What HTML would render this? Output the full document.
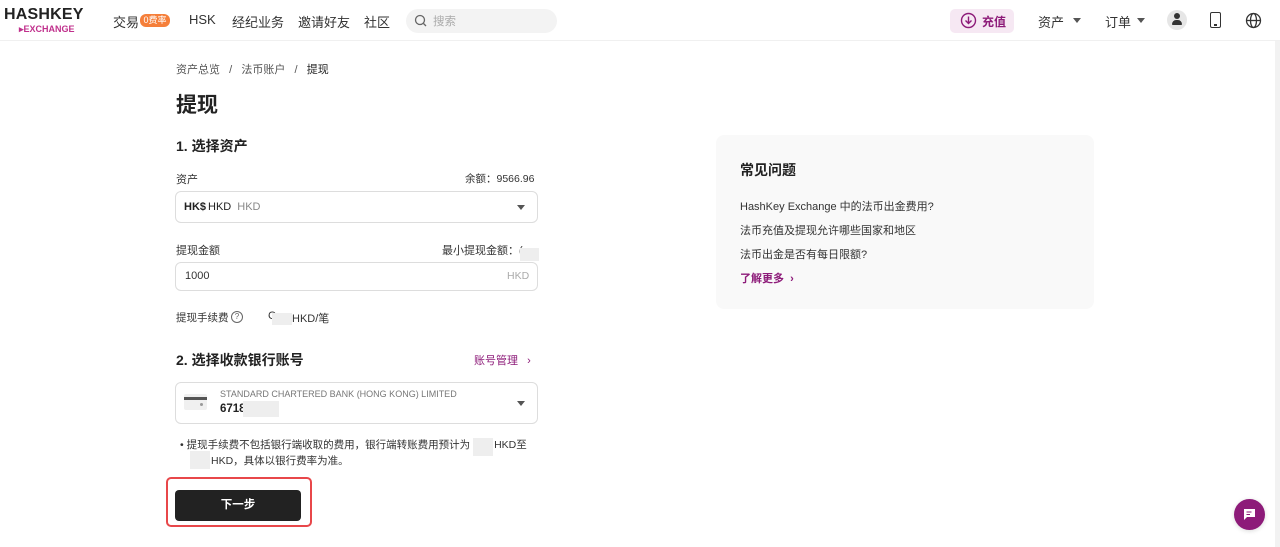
<!DOCTYPE html>
<html><head><meta charset="utf-8"><style>
*{box-sizing:border-box;margin:0;padding:0}
body{width:1280px;height:547px;overflow:hidden;background:#fff;font-family:"Liberation Sans","Noto Sans CJK SC",sans-serif;color:#222;position:relative}
.a{position:absolute;white-space:nowrap}
.nav{position:absolute;left:0;top:0;width:1280px;height:41px;border-bottom:1px solid #f0f0f0}
.nv{font-size:13px;color:#333;top:12px}
.box{position:absolute;border:1px solid #ddd;border-radius:6px;background:#fff}
.caret{width:0;height:0;border-left:4px solid transparent;border-right:4px solid transparent;border-top:5px solid #555}
.lbl{font-size:11px;color:#333}
.blur{background:#eee;position:absolute}
</style></head><body>
<div class="nav">
 <div class="a" style="left:4px;top:6px;font-size:16px;font-weight:bold;letter-spacing:0.2px;color:#222">HASHKEY</div>
 <div class="a" style="left:19px;top:24px;font-size:9px;font-weight:bold;color:#c0308c">▸EXCHANGE</div>
 <div class="a nv" style="left:113px">交易</div>
 <div class="a" style="left:140px;top:14px;width:30px;height:13px;background:#f57f3a;border-radius:6px;color:#fff;font-size:9px;text-align:center;line-height:13px">0费率</div>
 <div class="a nv" style="left:189px">HSK</div>
 <div class="a nv" style="left:232px">经纪业务</div>
 <div class="a nv" style="left:298px">邀请好友</div>
 <div class="a nv" style="left:364px">社区</div>
 <div class="a" style="left:406px;top:9px;width:151px;height:24px;background:#f3f3f3;border-radius:12px"></div>
 <svg class="a" style="left:414px;top:14px" width="14" height="14" viewBox="0 0 14 14"><circle cx="6" cy="6" r="4.5" fill="none" stroke="#666" stroke-width="1.3"/><path d="M9.5 9.5L12 12" stroke="#666" stroke-width="1.3"/></svg>
 <div class="a" style="left:433px;top:13px;font-size:11.5px;color:#aaa">搜索</div>
 <div class="a" style="left:950px;top:9px;width:64px;height:24px;background:#f6e8f3;border-radius:5px"></div>
 <svg class="a" style="left:960px;top:12px" width="17" height="17" viewBox="0 0 17 17"><circle cx="8.5" cy="8.5" r="7" fill="none" stroke="#8d1b79" stroke-width="1.4"/><path d="M8.5 4.5v7M5.5 8.5l3 3 3-3" fill="none" stroke="#8d1b79" stroke-width="1.4"/></svg>
 <div class="a" style="left:982px;top:13px;font-size:12px;color:#8d1b79;font-weight:bold">充值</div>
 <div class="a nv" style="left:1038px">资产</div><div class="a caret" style="left:1073px;top:18px"></div>
 <div class="a nv" style="left:1105px">订单</div><div class="a caret" style="left:1137px;top:18px"></div>
 <div class="a" style="left:1167px;top:10px;width:20px;height:20px;border-radius:50%;background:#e6e6e6"></div>
 <div class="a" style="left:1174px;top:13px;width:6px;height:6px;border-radius:50%;background:#333"></div>
 <div class="a" style="left:1172px;top:20px;width:10px;height:5px;border-radius:5px 5px 1px 1px;background:#333"></div>
 <div class="a" style="left:1210px;top:12px;width:11px;height:16px;border:1.5px solid #333;border-radius:2px"></div>
 <div class="a" style="left:1214px;top:24px;width:3px;height:1.5px;background:#333"></div>
 <svg class="a" style="left:1245px;top:12px" width="17" height="17" viewBox="0 0 17 17" fill="none" stroke="#333" stroke-width="1.3"><circle cx="8.5" cy="8.5" r="7"/><ellipse cx="8.5" cy="8.5" rx="3" ry="7"/><path d="M1.5 8.5h14"/></svg>
</div>
<div class="a" style="left:1275px;top:41px;width:5px;height:506px;background:#f2f2f2"></div>

<div class="a" style="left:176px;top:61px;font-size:11px;color:#555">资产总览 &nbsp;&nbsp;/&nbsp;&nbsp; 法币账户 &nbsp;&nbsp;/&nbsp;&nbsp; <span style="color:#222">提现</span></div>
<div class="a" style="left:176px;top:89px;font-size:21px;font-weight:bold">提现</div>
<div class="a" style="left:176px;top:136px;font-size:14px;font-weight:bold">1. 选择资产</div>
<div class="a lbl" style="left:176px;top:171px">资产</div>
<div class="a lbl" style="left:465px;top:171px;font-size:10.5px">余额：9566.96</div>
<div class="box" style="left:175px;top:191px;width:363px;height:32px"></div>
<div class="a" style="left:184px;top:201px;font-size:11px;font-weight:bold;color:#222">HK$</div>
<div class="a" style="left:208px;top:201px;font-size:11px">HKD <span style="color:#888;margin-left:3px">HKD</span></div>
<div class="a caret" style="left:517px;top:205px"></div>
<div class="a lbl" style="left:176px;top:242px">提现金额</div>
<div class="a lbl" style="left:442px;top:242px">最小提现金额：(</div>
<div class="blur" style="left:520px;top:248px;width:19px;height:13px"></div>
<div class="box" style="left:175px;top:262px;width:363px;height:29px"></div>
<div class="a" style="left:185px;top:270px;font-size:11px;color:#333">1000</div>
<div class="a" style="left:507px;top:270px;font-size:10.5px;color:#aaa">HKD</div>
<div class="a lbl" style="left:176px;top:310px;font-size:10.5px">提现手续费</div>
<div class="a" style="left:231px;top:311px;width:12px;height:12px;border:1px solid #666;border-radius:50%;font-size:8px;text-align:center;line-height:10px;color:#666">?</div>
<div class="a lbl" style="left:268px;top:310px">C</div>
<div class="blur" style="left:272px;top:313px;width:20px;height:12px"></div>
<div class="a lbl" style="left:292px;top:310px">HKD/笔</div>
<div class="a" style="left:176px;top:350px;font-size:14px;font-weight:bold">2. 选择收款银行账号</div>
<div class="a" style="left:474px;top:352px;font-size:11px;color:#8d1b79">账号管理 &nbsp;&nbsp;›</div>
<div class="box" style="left:175px;top:382px;width:363px;height:42px"></div>
<div class="a" style="left:184px;top:394px;width:23px;height:16px;background:#f0f0f0;border-radius:2px"></div>
<div class="a" style="left:184px;top:397px;width:23px;height:3px;background:#555"></div>
<div class="a" style="left:200px;top:403px;width:3px;height:3px;background:#999;border-radius:50%"></div>
<div class="a" style="left:220px;top:389px;font-size:9px;color:#777">STANDARD CHARTERED BANK (HONG KONG) LIMITED</div>
<div class="a" style="left:220px;top:403px;font-size:11.5px;font-weight:bold">6718</div>
<div class="blur" style="left:243px;top:401px;width:36px;height:16px"></div>
<div class="a caret" style="left:517px;top:401px"></div>
<div class="a" style="left:180px;top:437px;font-size:10.5px;color:#333;line-height:16px">• 提现手续费不包括银行端收取的费用，银行端转账费用预计为<span style="display:inline-block;width:24px"></span>HKD至</div>
<div class="blur" style="left:473px;top:438px;width:20px;height:18px"></div>
<div class="blur" style="left:190px;top:451px;width:20px;height:18px"></div>
<div class="a" style="left:211px;top:453px;font-size:10.5px;color:#333">HKD，具体以银行费率为准。</div>
<div class="a" style="left:166px;top:477px;width:146px;height:50px;border:2.5px solid #e8474a;border-radius:5px"></div>
<div class="a" style="left:175px;top:490px;width:126px;height:31px;background:#222;border-radius:4px;color:#fff;font-size:11.5px;font-weight:bold;text-align:center;line-height:31px">下一步</div>

<div class="a" style="left:716px;top:135px;width:378px;height:174px;background:#f9f9f9;border-radius:8px"></div>
<div class="a" style="left:740px;top:160px;font-size:14px;font-weight:bold">常见问题</div>
<div class="a" style="left:740px;top:198px;font-size:11px;color:#333">HashKey Exchange 中的法币出金费用?</div>
<div class="a" style="left:740px;top:222px;font-size:11px;color:#333">法币充值及提现允许哪些国家和地区</div>
<div class="a" style="left:740px;top:246px;font-size:11px;color:#333">法币出金是否有每日限额?</div>
<div class="a" style="left:740px;top:270px;font-size:11px;color:#8d1b79;font-weight:bold">了解更多 &nbsp;›</div>

<div class="a" style="left:1234px;top:499px;width:31px;height:31px;border-radius:50%;background:#8d1b79;box-shadow:0 1px 5px rgba(0,0,0,.15)"></div>
<svg class="a" style="left:1242px;top:507px" width="15" height="15" viewBox="0 0 15 15"><path d="M2 2h11v8H5l-3 3z" fill="#fff"/><path d="M4.5 5h5M4.5 7.5h3.5" stroke="#8d1b79" stroke-width="1.1"/></svg>
</body></html>
